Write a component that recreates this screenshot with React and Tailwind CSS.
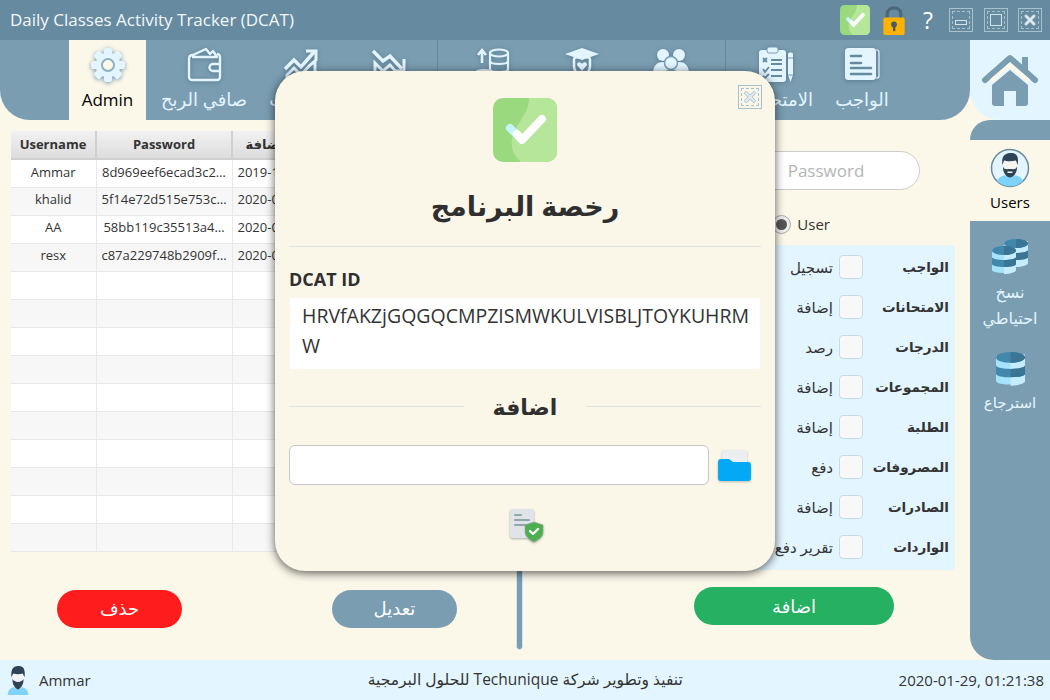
const users = [
  ['Ammar', '8d969eef6ecad3c2…', '2019-12-01'],
  ['khalid', '5f14e72d515e753c…', '2020-01-05'],
  ['AA', '58bb119c35513a4…', '2020-01-12'],
  ['resx', 'c87a229748b2909f…', '2020-01-20'],
]

const permissions = [
  ['الواجب', 'تسجيل'],
  ['الامتحانات', 'إضافة'],
  ['الدرجات', 'رصد'],
  ['المجموعات', 'إضافة'],
  ['الطلبة', 'إضافة'],
  ['المصروفات', 'دفع'],
  ['الصادرات', 'إضافة'],
  ['الواردات', 'تقرير دفع'],
]

function LicenseIcon({ className }) {
  return (
    <svg viewBox="0 0 64 64" className={className}>
      <rect width="64" height="64" rx="10" fill="#9bd97f" />
      <path d="M36 0H54a10 10 0 0 1 10 10V54a10 10 0 0 1-10 10H28C18 56 16 44 22 32C28 20 36 14 36 0Z" fill="#b5e699" />
      <path d="M17 30L29 42" stroke="#c8f4ff" strokeWidth="8" strokeLinecap="round" />
      <path d="M24 36L29 42L49 21" fill="none" stroke="#fff" strokeWidth="8" strokeLinecap="round" strokeLinejoin="round" />
    </svg>
  )
}

function WindowButton({ kind, className = '' }) {
  return (
    <div className={`flex h-6 w-6 items-center justify-center border border-[#a9c0cd] p-[2px] ${className}`}>
      <div className="flex h-full w-full items-center justify-center border border-dashed border-[#a9c0cd]">
        {kind === 'min' && <div className="mt-1 h-[5px] w-3 border border-[#d5e3ea]" />}
        {kind === 'max' && <div className="h-3 w-3 border border-[#d5e3ea]" />}
        {kind === 'close' && (
          <svg viewBox="0 0 12 12" className="h-3 w-3">
            <path d="M2 2L10 10M10 2L2 10" stroke="#a9c0cd" strokeWidth="3.4" strokeLinecap="round" />
            <path d="M2 2L10 10M10 2L2 10" stroke="#e3eef3" strokeWidth="1.8" strokeLinecap="round" />
          </svg>
        )}
      </div>
    </div>
  )
}

function Avatar({ className }) {
  return (
    <svg viewBox="0 0 40 40" className={className}>
      <circle cx="20" cy="20" r="18.5" fill="#e3f5ff" stroke="#668a9f" strokeWidth="1.5" />
      <path d="M7 33C9 28 14 27 20 27C26 27 31 28 33 33A18.5 18.5 0 0 1 7 33Z" fill="#7fd3fb" />
      <path d="M13 12C13 6 27 6 27 12V21C27 26 23 29 20 29C17 29 13 26 13 21Z" fill="#f7f3ee" />
      <path d="M12.5 17C11 8 15 5 21 5C27 5 29 9 27.5 17L26 12.5C22 13.5 17 13.5 14 12.5Z" fill="#2e4456" />
      <path d="M13 18.5C14 22 17 21 20 21C23 21 26 22 27 18.5C27.5 25 23 29.5 20 29.5C17 29.5 12.5 25 13 18.5Z" fill="#2e4456" />
      <path d="M17.5 23.5H22.5V25H17.5Z" fill="#f7f3ee" />
    </svg>
  )
}

function Db({ x, y }) {
  return (
    <g transform={`translate(${x} ${y})`}>
      <path d="M0 4C0 0 24 0 24 4V24C24 28 0 28 0 24Z" fill="#a5e2fc" />
      <path d="M12 2H24V24C24 26 18 28 12 28Z" fill="#c5edfd" />
      <path d="M0 11C0 15 24 15 24 11V18C24 22 0 22 0 18Z" fill="#4288ad" />
      <path d="M12 14V21C18 21 24 20 24 18V11C24 13 18 14 12 14Z" fill="#3a7596" />
      <ellipse cx="12" cy="4.5" rx="12" ry="4.5" fill="#4288ad" />
      <path d="M12 0C18 0 24 2 24 4.5C24 7 18 9 12 9Z" fill="#3a7596" />
    </g>
  )
}

const navIcons = {
  wallet: (
    <svg viewBox="0 0 36 36" className="h-9 w-9" fill="none" stroke="#e3f5ff" strokeWidth="2.4" strokeLinejoin="round">
      <path d="M3 12V30A3 3 0 0 0 6 33H31A3 3 0 0 0 34 30V10A3 3 0 0 0 31 7" />
      <path d="M3 12C3 9 4 8 7 8L20 2L24 7L27 4L31 10H6" />
      <path d="M34 17H27A3.5 3.5 0 0 0 27 24H34" />
    </svg>
  ),
  up: (
    <svg viewBox="0 0 36 36" className="h-9 w-9" fill="none" stroke="#e3f5ff" strokeWidth="3.5">
      <path d="M2 22L11 13L18 20L31 5" />
      <path d="M23 4H33V14" strokeWidth="3" />
      <path d="M4 34V28L11 21L18 28L26 19L32 14V34" strokeWidth="3" />
    </svg>
  ),
  down: (
    <svg viewBox="0 0 36 36" className="h-9 w-9" fill="none" stroke="#e3f5ff" strokeWidth="3.5">
      <path d="M2 4L12 14L19 9L31 22" />
      <path d="M33 12V24H23" strokeWidth="3" />
      <path d="M4 34V16L12 24L19 18L30 30V34" strokeWidth="3" />
    </svg>
  ),
  coins: (
    <svg viewBox="0 0 36 36" className="h-9 w-9" fill="none" stroke="#e3f5ff" strokeWidth="2.2">
      <path d="M7 16V4M3 8L7 3L11 8" strokeWidth="2.6" />
      <ellipse cx="24" cy="6" rx="9" ry="3.5" />
      <path d="M15 6V30M33 6V30C33 34 20 34 16 32M15 14C15 18 33 18 33 14M15 22C15 26 33 26 33 22" />
      <ellipse cx="9" cy="26" rx="8" ry="3" />
      <path d="M1 26V31C1 35 17 35 17 31V26" />
    </svg>
  ),
  student: (
    <svg viewBox="0 0 36 36" className="h-9 w-9">
      <path d="M18 1L35 7L18 13L1 7Z" fill="#e3f5ff" />
      <path d="M10 12C10 9 26 9 26 12V19C26 25 22 28 18 28C14 28 10 25 10 19Z" fill="none" stroke="#e3f5ff" strokeWidth="2.5" />
      <path d="M18 24L13 18C13 14 17 15 18 17C19 15 23 14 23 18Z" fill="#e3f5ff" />
      <path d="M5 36C5 30 10 28 14 28L18 32L22 28C26 28 31 30 31 36Z" fill="#e3f5ff" />
    </svg>
  ),
  group: (
    <svg viewBox="0 0 36 36" className="h-9 w-9" fill="#e3f5ff">
      <circle cx="10" cy="8" r="6" />
      <circle cx="26" cy="8" r="6" />
      <path d="M0 26C0 18 5 15 10 15C15 15 20 18 20 26ZM16 26C16 18 21 15 26 15C31 15 36 18 36 26Z" />
      <circle cx="18" cy="16" r="6.5" stroke="#7a9db1" strokeWidth="1.5" />
      <path d="M7 36C7 27 12 23.5 18 23.5C24 23.5 29 27 29 36Z" stroke="#7a9db1" strokeWidth="1.5" />
    </svg>
  ),
  exam: (
    <svg viewBox="0 0 36 36" className="h-9 w-9">
      <rect x="1" y="3" width="27" height="32" rx="3" fill="#e3f5ff" />
      <rect x="9" y="0" width="11" height="6" rx="2" fill="#e3f5ff" stroke="#7a9db1" />
      <path d="M5 11L9 15M9 11L5 15M5 22L7 25L11 20M5 29L7 31L11 27" fill="none" stroke="#668a9f" strokeWidth="1.8" />
      <path d="M13 13H24M13 17H24M13 23H24M13 29H24" stroke="#668a9f" strokeWidth="1.8" />
      <path d="M30 7C30 5 35 5 35 7V28L32.5 35L30 28Z" fill="#e3f5ff" />
      <path d="M30 11H35M30 28H35" stroke="#7a9db1" />
    </svg>
  ),
  homework: (
    <svg viewBox="0 0 36 36" className="h-9 w-9">
      <path d="M32 3H33A2 2 0 0 1 35 5V29A2 2 0 0 1 33 31H32" fill="none" stroke="#e3f5ff" strokeWidth="1.2" />
      <rect x="1" y="1" width="31" height="32" rx="3.5" fill="#e3f5ff" />
      <path d="M7 9H17M7 16H17M7 21H27M7 27H27" stroke="#668a9f" strokeWidth="2.6" strokeLinecap="round" />
    </svg>
  ),
}

const navItems = [
  { key: 'wallet', label: 'صافي الربح', w: 'w-[116px]' },
  { key: 'up', label: 'الواردات', w: 'w-[78px]' },
  { key: 'down', label: 'الصادرات', w: 'w-[97px]' },
  { key: 'coins', label: 'المصروفات', w: 'w-[110px] border-l border-[#668a9f]' },
  { key: 'student', label: 'الطلبة', w: 'w-[70px]' },
  { key: 'group', label: 'المجموعات', w: 'w-[108px]' },
  { key: 'exam', label: 'الامتحانات', w: 'w-[100px] border-l border-[#668a9f]' },
  { key: 'homework', label: 'الواجب', w: 'w-[74px]' },
]

function NavItem({ icon, label, w }) {
  return (
    <div className={`flex h-full shrink-0 flex-col items-center pt-[7px] ${w}`}>
      <div className="h-9 drop-shadow-[0_1px_2px_rgba(60,90,110,0.5)]">{icon}</div>
      <span className="mt-[3px] whitespace-nowrap text-[18px] leading-[27px] text-[#e3f5ff]">{label}</span>
    </div>
  )
}

function ActionButton({ className, children }) {
  return <button className={`flex h-[38px] items-center justify-center rounded-full text-[18px] text-white ${className}`}>{children}</button>
}

export default function App() {
  const rows = Array.from({ length: 14 }, (_, i) => users[i] || ['', '', ''])

  return (
    <div className="relative flex h-[700px] w-[1050px] flex-col overflow-hidden bg-[#fbf8ea] font-['Open_Sans','DejaVu_Sans',sans-serif] text-[#333]">
      {/* title bar */}
      <div className="flex h-10 shrink-0 items-center bg-[#668a9f] pl-[10px] pr-[8px]">
        <span className="text-[17px] text-[#f3f8fa]">Daily Classes Activity Tracker (DCAT)</span>
        <div className="ml-auto flex items-center">
          <LicenseIcon className="h-[30px] w-[30px]" />
          <svg viewBox="0 0 24 32" className="ml-[12px] h-[31px] w-[24px]">
            <path d="M5 15V9C5 1 19 1 19 9V15" fill="none" stroke="#4d6678" strokeWidth="3.2" />
            <rect x="1" y="13" width="22" height="18" rx="2" fill="#ffb300" />
            <circle cx="12" cy="20" r="3" fill="#455a64" />
            <rect x="11" y="21" width="2.4" height="6" fill="#455a64" />
          </svg>
          <span className="ml-[17px] text-[23px] leading-none text-white">?</span>
          <WindowButton kind="min" className="ml-[16px]" />
          <WindowButton kind="max" className="ml-[11px]" />
          <WindowButton kind="close" className="ml-[10px]" />
        </div>
      </div>

      <div className="flex min-h-0 flex-1">
        {/* main area */}
        <div className="flex w-[970px] shrink-0 flex-col">
          <div className="flex h-20 shrink-0 rounded-b-[30px] bg-[#7a9db1] pl-[69px]">
            <div className="flex h-full w-[77px] shrink-0 flex-col items-center bg-[#fbf8ea] pt-[7px]">
              <svg viewBox="0 0 36 36" className="h-9 w-9 drop-shadow-[0_1px_2px_rgba(70,110,140,0.7)]">
                <g fill="#e3f5ff">
                  {[0, 45, 90, 135, 180, 225, 270, 315].map((a) => (
                    <rect key={a} x="14" y="1" width="8" height="8" rx="2" transform={`rotate(${a} 18 18)`} />
                  ))}
                  <circle cx="18" cy="18" r="12.5" />
                </g>
                <circle cx="18" cy="18" r="6" fill="#fbf8ea" stroke="#8fb0c4" strokeWidth="2" />
              </svg>
              <span className="mt-[3px] text-[17px] leading-[27px] text-black">Admin</span>
            </div>
            {navItems.map((n) => (
              <NavItem key={n.key} icon={navIcons[n.key]} label={n.label} w={n.w} />
            ))}
          </div>

          <div className="flex min-h-0 flex-1">
            {/* table side */}
            <div className="flex w-[516px] shrink-0 flex-col pl-[11px] pt-[11px]">
              <table className="w-[494px] table-fixed border-collapse text-[13px]">
                <thead>
                  <tr className="h-[28px] bg-gradient-to-b from-[#f2f2f2] to-[#dcdcdc] text-[13px] font-bold text-[#333]">
                    <th className="w-[85px] border-r-2 border-b-2 border-[#d0d0d0]">Username</th>
                    <th className="w-[136px] border-r-2 border-b-2 border-[#d0d0d0]">Password</th>
                    <th className="w-[110px] border-r-2 border-b-2 border-[#d0d0d0]">تاريخ الاضافة</th>
                    <th className="border-b-2 border-[#d0d0d0]">الصلاحية</th>
                  </tr>
                </thead>
                <tbody>
                  {rows.map((r, i) => (
                    <tr key={i} className={`h-[28px] ${i % 2 ? 'bg-[#f7f7f7]' : 'bg-white'}`}>
                      <td className="border-r border-b border-[#e8e8e8] pb-[2px] text-center">{r[0]}</td>
                      <td className="whitespace-nowrap border-r border-b border-[#e8e8e8] pb-[2px] text-center">{r[1]}</td>
                      <td className="border-r border-b border-[#e8e8e8] pb-[2px] pl-[5px]">{r[2]}</td>
                      <td className="border-b border-[#e8e8e8]" />
                    </tr>
                  ))}
                </tbody>
              </table>
              <div className="mt-[38px] flex gap-[150px] pl-[46px]">
                <ActionButton className="w-[125px] bg-[#ff1c1c]">حذف</ActionButton>
                <ActionButton className="w-[125px] bg-[#7a9db1]">تعديل</ActionButton>
              </div>
            </div>

            {/* splitter */}
            <div className="mb-[10px] mt-[10px] w-[7px] shrink-0 rounded-full border border-[#d5e6ef] bg-[#7a9db1]" />

            {/* user form */}
            <div className="flex min-w-0 flex-1 flex-col pr-[15px] pt-[31px]">
              <div className="flex justify-end gap-[10px] pr-[35px]">
                <input
                  placeholder="Username"
                  className="h-[39px] w-[170px] rounded-full border border-[#ccc] bg-white px-[16px] text-center text-[17px]"
                />
                <input
                  placeholder="Password"
                  className="h-[39px] w-[188px] rounded-full border border-[#ccc] bg-white px-[16px] text-center text-[17px] placeholder:text-[#b5b5b5]"
                />
              </div>
              <div className="mt-[22px] flex h-6 items-center justify-end gap-[6px] pr-[125px] text-[15px]">
                <span className="h-[19px] w-[19px] rounded-full border border-[#aaa] bg-[#eee] p-[3px]">
                  <span className="block h-full w-full rounded-full bg-[#555]" />
                </span>
                <span>User</span>
              </div>
              <div className="ml-[12px] mt-[9px] flex h-[325px] flex-col rounded-[4px] bg-[#e3f5ff] pt-[2px]">
                {permissions.map(([label, action]) => (
                  <div key={label} dir="rtl" className="flex h-10 items-center pr-[6px]">
                    <span className="w-[86px] text-[13.5px] font-semibold">{label}</span>
                    <span className="h-6 w-6 rounded-[4px] border border-[#c4dcea] bg-[#f8f8f8]" />
                    <span className="mr-[6px] whitespace-nowrap text-[15px]">{action}</span>
                  </div>
                ))}
              </div>
              <div className="mt-[17px] flex pl-[171px]">
                <ActionButton className="w-[200px] bg-[#25b062]">اضافة</ActionButton>
              </div>
            </div>
          </div>
        </div>

        {/* right sidebar */}
        <div className="flex w-20 shrink-0 flex-col">
          <div className="flex h-20 shrink-0 items-center justify-center rounded-bl-[30px] bg-[#e3f5ff]">
            <svg viewBox="0 0 56 52" className="h-[54px] w-[56px]">
              <rect x="40" y="3" width="6" height="14" fill="#7a9db1" />
              <path d="M3 26L28 4L53 26" fill="none" stroke="#7a9db1" strokeWidth="6" strokeLinecap="round" strokeLinejoin="round" />
              <path d="M9 27L28 11L47 27" fill="none" stroke="#fbf8ea" strokeWidth="4" />
              <path d="M10 31L28 16L46 31V49A3 3 0 0 1 43 52H34V37H22V52H13A3 3 0 0 1 10 49Z" fill="#7a9db1" />
            </svg>
          </div>
          <div className="h-5 shrink-0 rounded-tl-[30px] bg-[#7a9db1]" />
          <div className="flex h-[81px] shrink-0 flex-col items-center pt-[8px]">
            <Avatar className="h-[40px] w-[40px]" />
            <span className="mt-[3px] text-[15px] text-black">Users</span>
          </div>
          <div className="flex flex-1 flex-col items-center rounded-bl-[24px] bg-[#7a9db1] pt-[18px] text-[16px] text-[#e3f5ff]">
            <svg viewBox="0 0 36 36" className="h-[36px] w-[36px]">
              <Db x="12" y="0" />
              <Db x="0" y="7" />
            </svg>
            <span className="mt-[4px] text-center leading-[26px]">نسخ<br />احتياطي</span>
            <svg viewBox="0 0 24 29" className="mt-[21px] h-[35px] w-[29px]">
              <Db x="0" y="0" />
            </svg>
            <span className="mt-[4px] text-[15px]">استرجاع</span>
          </div>
        </div>
      </div>

      {/* status bar */}
      <div className="relative flex h-10 shrink-0 items-center bg-[#e3f6ff] pl-[6px] pr-[6px] text-[15px]">
        <svg viewBox="0 0 24 32" className="h-[30px] w-[24px]">
          <path d="M1 32C1 25 7 23 12 23C17 23 23 25 23 32Z" fill="#7fd3fb" />
          <path d="M6 9C6 3 18 3 18 9V18C18 23 14 26 12 26C10 26 6 23 6 18Z" fill="#f4f4f4" />
          <path d="M5 13C4 3 8 1 13 1C18 1 20 5 19 13L17 9C14 10 10 10 7 9Z" fill="#2e4456" />
          <path d="M6 15C8 19 16 19 18 15C18 22 14 26 12 26C10 26 6 22 6 15Z" fill="#2e4456" />
        </svg>
        <span className="ml-[9px]">Ammar</span>
        <span className="ml-[277px] text-[15.5px]" dir="rtl">تنفيذ وتطوير شركة Techunique للحلول البرمجية</span>
        <span className="ml-auto">2020-01-29, 01:21:38</span>
      </div>

      {/* license dialog */}
      <div className="absolute left-[275px] top-[71px] flex h-[500px] w-[500px] flex-col rounded-[30px] bg-[#faf7e9] px-[14px] shadow-[0_2px_10px_rgba(0,0,0,0.65)]">
        <WindowButton kind="close" className="absolute right-[13px] top-[14px]" />
        <LicenseIcon className="mx-auto mt-[27px] h-16 w-16 shrink-0" />
        <div className="mt-[19px] text-center text-[27px] font-bold leading-[50px] text-[#2f2f2f]" dir="rtl">رخصة البرنامج</div>
        <div className="mt-[15px] h-px shrink-0 bg-[#dfe4e0]" />
        <div className="mt-[19px] text-[18px] font-bold leading-[26px] text-[#2f2f2f]">DCAT ID</div>
        <div className="mx-px mt-[6px] h-[71px] shrink-0 break-all bg-white py-[3px] pl-[12px] pr-[10px] text-[19.5px] leading-[30px] text-[#333]">
          HRVfAKZjGQGQCMPZISMWKULVISBLJTOYKUHRMW
        </div>
        <div className="mt-[22px] flex h-[30px] shrink-0 items-center">
          <div className="h-px flex-1 bg-[#dfe4e0]" />
          <span className="w-[122px] text-center text-[22px] font-semibold text-[#2f2f2f]">اضافة</span>
          <div className="h-px flex-1 bg-[#dfe4e0]" />
        </div>
        <div className="mt-[24px] flex shrink-0 items-center">
          <input className="h-[40px] w-[420px] rounded-[6px] border border-[#c8c8c8] bg-white" />
          <svg viewBox="0 0 33 33" className="ml-[9px] h-[33px] w-[33px] drop-shadow-[0_1px_1px_rgba(0,0,0,0.25)]">
            <rect x="4" y="1" width="25" height="20" rx="3" fill="#eceff1" />
            <path d="M0 13A3 3 0 0 1 3 10H11L15 13H30A3 3 0 0 1 33 16V29A3 3 0 0 1 30 32H3A3 3 0 0 1 0 29Z" fill="#03a9f4" />
          </svg>
        </div>
        <svg viewBox="0 0 34 34" className="ml-[221px] mt-[24px] h-[34px] w-[34px] shrink-0 drop-shadow-[0_1px_1px_rgba(0,0,0,0.3)]">
          <rect x="0" y="0" width="24" height="29" rx="3" fill="#e0e4e8" />
          <path d="M5 6H11M5 11H19M5 16H17" stroke="#90a4ae" strokeWidth="2" strokeLinecap="round" />
          <path d="M24 13L33 16V23C33 28 28 31 24 33C20 31 15 28 15 23V16Z" fill="#4caf50" stroke="#9e9e9e" strokeWidth="0.6" />
          <path d="M20 22L23 25L28 20" fill="none" stroke="#fff" strokeWidth="2.2" strokeLinecap="round" strokeLinejoin="round" />
        </svg>
      </div>
    </div>
  )
}
